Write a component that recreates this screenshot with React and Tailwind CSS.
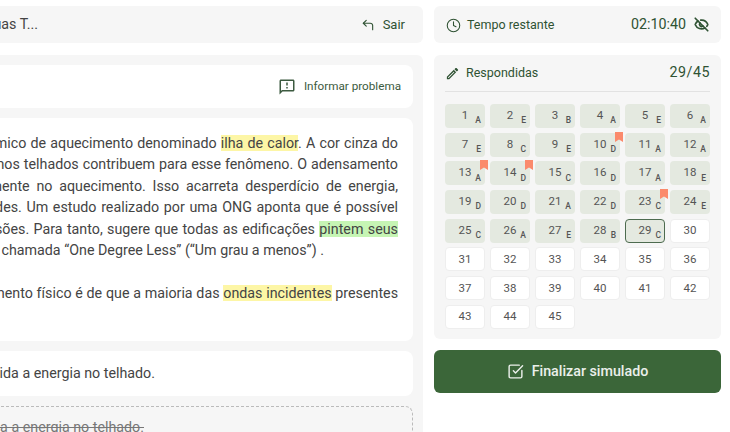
import React from "react";
import { Clock, CornerUpLeft, EyeOff, SquareCheckBig } from "lucide-react";
import { MdOutlineEdit, MdOutlineFeedback } from "react-icons/md";

const answers = "AEBAEAECEDAAADCDAEDDADCECAEBC".split("");
const flagged = [10, 13, 14, 23];
const numbers = Array.from({ length: 45 }, (_, i) => i + 1);

function Flag() {
  return (
    <svg width="8" height="10" viewBox="0 0 8 10" className="absolute -top-[1px] -right-[3px]">
      <path d="M0 0H8V10L4 7.6L0 10Z" fill="#fb8a6c" />
    </svg>
  );
}

function Cell({ n }) {
  const answer = answers[n - 1];
  const current = n === 29;

  if (!answer) {
    return (
      <div className="h-6 flex items-center justify-center rounded-[4px] bg-white border border-[#eeeeee] text-[11.5px] text-[#555]">
        {n}
      </div>
    );
  }

  return (
    <div
      className={`relative h-6 flex items-center justify-center rounded-[4px] bg-[#e4e9e0] text-[11.5px] text-[#555] ${
        current ? "border border-[#4d6b4f]" : ""
      }`}
    >
      <span className="-mt-[1px]">{n}</span>
      <span className={`absolute text-[8.5px] font-medium ${current ? "right-[3px] bottom-0" : "right-[4px] bottom-[1px]"}`}>
        {answer}
      </span>
      {flagged.includes(n) && <Flag />}
    </div>
  );
}

function Line({ children, spacing = "" }) {
  return <p className={`whitespace-nowrap text-right ${spacing}`}>{children}</p>;
}

export default function App() {
  return (
    <div className="w-[730px] h-[432px] overflow-hidden bg-white flex justify-end gap-[11px] pt-[6px] pr-[9px] font-['Roboto',sans-serif]">
      <div className="w-[700px] shrink-0 flex flex-col gap-3">
        <div className="h-[37px] shrink-0 bg-[#f6f6f6] rounded-md flex items-center justify-between pr-[18px] text-[13px]">
          <span className="w-[315px] text-right text-[#444] text-[14.27px] whitespace-nowrap">Prova de Línguas T...</span>
          <button className="flex items-center gap-[8px] text-[#2f5233]">
            <CornerUpLeft size={14} strokeWidth={1.9} />
            Sair
          </button>
        </div>

        <div className="bg-[#f6f6f6] rounded-t-md px-[10px] pt-[10px] flex flex-col gap-[10px] h-[400px]">
          <div className="h-[43px] shrink-0 bg-white rounded-lg flex items-center justify-end pr-3 text-[11.7px] text-[#3c5a40] gap-2">
            <MdOutlineFeedback size={18} />
            Informar problema
          </div>

          <div className="h-[223px] shrink-0 bg-white rounded-lg pt-[15px] pr-[15px] text-[14.27px] leading-[21.4px] text-[#444]">
            <Line spacing="[word-spacing:0.6px]">
              fenômeno térmico de aquecimento denominado{" "}
              <mark className="bg-[#fdf6a6] text-[#444]">ilha de calor</mark>. A cor cinza do
            </Line>
            <Line spacing="[word-spacing:0.45px]">materiais usados nos telhados contribuem para esse fenômeno. O adensamento</Line>
            <Line spacing="[word-spacing:3.2px]">diretamente no aquecimento. Isso acarreta desperdício de energia,</Line>
            <Line spacing="[word-spacing:1.1px]">nas cidades. Um estudo realizado por uma ONG aponta que é possível</Line>
            <Line spacing="[word-spacing:0.85px]">
              emissões. Para tanto, sugere que todas as edificações{" "}
              <mark className="bg-[#c6f5b4] text-[#444]">pintem seus</mark>
            </Line>
            <p className="whitespace-nowrap text-right pr-[74px]">
              campanha chamada “One Degree Less” (“Um grau a menos”) .
            </p>
            <p className="whitespace-nowrap text-right mt-[21.4px] [word-spacing:0.2px]">
              O fundamento físico é de que a maioria das{" "}
              <mark className="bg-[#fdf6a6] text-[#444]">ondas incidentes</mark> presentes
            </p>
          </div>

          <div className="h-[45px] shrink-0 bg-white rounded-lg flex items-center text-[14.27px] text-[#444] whitespace-nowrap">
            <span className="w-[422px] text-right">A tinta branca é absorvida e convertida a energia no telhado.</span>
          </div>

          <div className="h-[60px] shrink-0 border border-dashed border-[#bbbbbb] rounded-lg bg-[#f6f6f6] text-[14.27px] text-[#777] pt-[10px] whitespace-nowrap">
            <p className="w-[410px] text-right line-through">A tinta branca é absorvida e convertida a energia no telhado.</p>
          </div>
        </div>
      </div>

      <div className="w-[287px] shrink-0 flex flex-col">
        <div className="h-[37px] shrink-0 bg-[#f6f6f6] rounded-md flex items-center justify-between pl-3 pr-3 text-[#2f5233]">
          <span className="flex items-center gap-[6px] text-[12.5px] pt-[1px]">
            <Clock size={15} strokeWidth={1.7} />
            Tempo restante
          </span>
          <span className="flex items-center gap-[8px] text-[14.27px]">
            02:10:40
            <EyeOff size={15} strokeWidth={2.7} />
          </span>
        </div>

        <div className="mt-3 h-[284px] shrink-0 bg-[#f6f6f6] rounded-md px-[11px]">
          <div className="h-[37px] flex items-center justify-between border-b border-[#e2e2e2] text-[#2f5233]">
            <span className="flex items-center gap-[6px] text-[12.5px] pt-[1px]">
              <MdOutlineEdit size={15} />
              Respondidas
            </span>
            <span className="text-[14.27px] tracking-[0.5px]">29/45</span>
          </div>
          <div className="mt-3 grid grid-cols-6 gap-x-[5px] gap-y-[4.7px]">
            {numbers.map((n) => (
              <Cell key={n} n={n} />
            ))}
          </div>
        </div>

        <button className="mt-[11px] h-[43px] shrink-0 bg-[#3b6639] rounded-md flex items-center justify-center gap-2 text-white/90 text-[14.27px] font-medium">
          <SquareCheckBig size={17} strokeWidth={2} />
          Finalizar simulado
        </button>
      </div>
    </div>
  );
}
